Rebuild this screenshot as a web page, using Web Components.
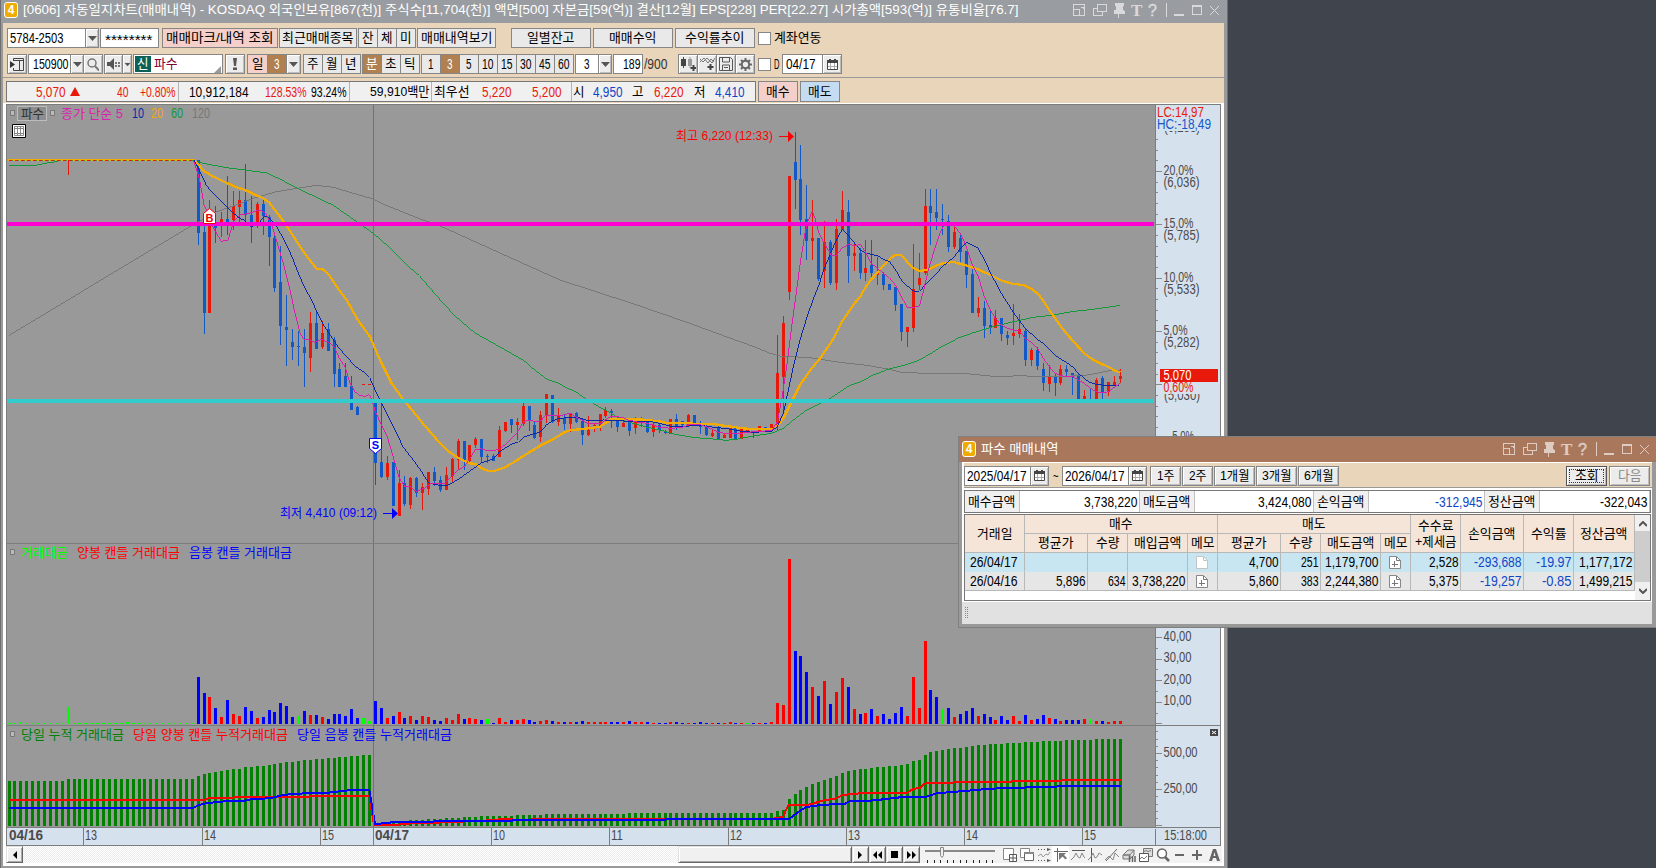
<!DOCTYPE html>
<html lang="ko">
<head>
<meta charset="utf-8">
<title>[0606] 자동일지차트</title>
<style>
    body {
        margin: 0;
        width: 1656px;
        height: 868px;
        overflow: hidden;
        background: #40444c;
        font: 13px/16px "Liberation Sans", "Noto Sans CJK KR", sans-serif;
        color: #000;
    }
    desk-window {
        position: absolute;
    }
    #chart {
        left: 0;
        top: 0;
        width: 1228px;
        height: 868px;
    }
    #trades {
        left: 958px;
        top: 436px;
        width: 698px;
        height: 192px;
    }
</style>
</head>
<body>
<desk-window id="chart" title-bg="#999ca0" frame="main" heading="[0606] 자동일지차트(매매내역) - KOSDAQ 외국인보유[867(천)] 주식수[11,704(천)] 액면[500] 자본금[59(억)] 결산[12월] EPS[228] PER[22.27] 시가총액[593(억)] 유통비율[76.7]">
    <chart-toolbar></chart-toolbar>
    <quote-bar></quote-bar>
    <price-chart></price-chart>
    <chart-scroller></chart-scroller>
</desk-window>
<desk-window id="trades" title-bg="#a9785c" frame="sub" heading="파수 매매내역">
    <trade-search></trade-search>
    <trade-summary></trade-summary>
    <trade-grid></trade-grid>
    <status-strip></status-strip>
</desk-window>

<script>
// Text on a fixed cell: 12px for a Hangul syllable, 6px for anything else
class CellText extends HTMLElement {
    constructor() {
        super();
        this.attachShadow({ mode: "open" });
    }

    connectedCallback() {
        this.shadowRoot.innerHTML = `
        <style>
            :host {
                display: inline-flex;
                flex: none;
                height: 16px;
                line-height: 16px;
            }
            span {
                flex: none;
                height: 16px;
                white-space: pre;
                transform-origin: 0 50%;
            }
        </style>
        <span><slot></slot></span>`;
        const text = this.textContent;
        let width = Number(this.getAttribute("w"));
        if (!width) {
            for (const c of text) width += c > "\u1100" ? 12 : 6;
        }
        if (!/[\u1100-\uffff]/.test(text)) this.style.fontSize = "14px";
        const span = this.shadowRoot.querySelector("span");
        const natural = span.getBoundingClientRect().width;
        this.style.width = width + "px";
        if (natural) span.style.transform = `scaleX(${(width - .5) / natural})`;
    }
}
customElements.define("cell-text", CellText);

const ICONS = {
    down: [9, 5, `<path d="M0 0h9L4.500 5z" fill="#555"/>`],
    up: [10, 9, `<path d="M5 0l5 9H0z" fill="#e8190a"/>`],
    panel: [14, 13, `<path d="M3.500 3V.5h10v12h-10V10M3 2.500h11M9.500 3v9" fill="none" stroke="#444"/><path d="M0 3l5 3.500L0 10z" fill="#333"/>`],
    search: [12, 13, `<circle cx="5" cy="5" r="4" fill="none" stroke="#777" stroke-width="1.500"/><path d="M8 8l4 4.500" stroke="#777" stroke-width="2"/>`],
    sound: [13, 12, `<path d="M0 4h3l4-4v12L3 8H0z" fill="#555"/><path d="M8 4h2v2H8zM8 7h2v2H8zM11 4h2v2h-2zM11 7h2v2h-2z" fill="#777"/>`],
    corner: [7, 7, `<path d="M7 0v7H0z" fill="#999"/>`],
    bang: [4, 12, `<path d="M0 0h4l-1 8H1zM0 9.500h4V12H0z" fill="#555"/>`],
    candles: [15, 14, `<path d="M0 2h5v7H0zM2 0h1v11H2z" fill="#444"/><path d="M7 2h4v7H7zM8.500 0h1v11h-1z" fill="#999"/><path d="M12.500 8v6M9.500 11h6" stroke="#444" stroke-width="2"/>`],
    lines: [15, 14, `<path d="M0 5l4-4 4 5 3-4 3 3M0 2l3 3 4-4 5 5 3-5" fill="none" stroke="#777"/><path d="M10.500 7v6M7.500 10h6" stroke="#444" stroke-width="2"/>`],
    save: [14, 14, `<path d="M.5.5h11l2 2v11H.5z" fill="none" stroke="#555"/><path d="M3.500 1v4h7V1M3.500 13V8h7v5M5 10.500h4" fill="none" stroke="#555"/>`],
    gear: [13, 13, `<circle cx="6.500" cy="6.500" r="3.700" fill="none" stroke="#666" stroke-width="2"/><path d="M6.500 0v3M6.500 10v3M0 6.500h3M10 6.500h3M2 2l2 2M9 9l2 2M11 2L9 4M4 9l-2 2" stroke="#666" stroke-width="2"/>`],
    calendar: [11, 11, `<path d="M.5 1.500h10v9H.5z" fill="#fff" stroke="#444"/><path d="M0 1h11v3H0zM2 0h2v2H2zM7 0h2v2H7z" fill="#444"/><path d="M3.500 4v6M7.500 4v6M1 7.500h9" stroke="#aaa"/>`],
    page: [12, 13, `<path d="M.5.5h7l4 4v8H.5z" fill="#fff" stroke="#c4c4c4"/><path d="M7.500 1v3.500h4" fill="none" stroke="#c4c4c4"/>`],
    memo: [12, 13, `<path d="M.5.5h7l4 4v8H.5z" fill="#fff" stroke="#888"/><path d="M7.500 1v3.500h4M5.500 5v6M3 8.500h6" fill="none" stroke="#777"/>`],
    chevUp: [8, 6, `<path d="M0 5l4-4 4 4" fill="none" stroke="#555" stroke-width="2"/>`],
    chevDown: [8, 6, `<path d="M0 1l4 4 4-4" fill="none" stroke="#555" stroke-width="2"/>`],
    first: [5, 8, `<path d="M5 0v8L1 4z"/>`],
    play: [5, 8, `<path d="M0 0v8l4-4z"/>`],
    rewind: [9, 8, `<path d="M4 0v8L0 4zM9 0v8L5 4z"/>`],
    stop: [7, 7, `<path d="M0 0h7v7H0z"/>`],
    forward: [9, 8, `<path d="M0 0v8l4-4zM5 0v8l4-4z"/>`],
    addPane: [14, 14, `<path d="M6 11.500H.5V.5h10V6" fill="#fff" stroke="#888"/><path d="M6.500 6.500h7v7h-7zM10 6.500v7M6.500 10h7" fill="#fff" stroke="#555"/>`],
    cascade: [14, 14, `<path d="M4 9.500H.5v-9h9V4" fill="#fff" stroke="#888"/><path d="M4.500 4.500h9v8h-9z" fill="#fff" stroke="#666"/><path d="M4 4h10v2H4z" fill="#888"/>`],
    range: [14, 14, `<path d="M1 1.500h10M1 12.500h10" stroke="#555" stroke-dasharray="1 2"/><path d="M1 8l3-2 2 3 3-3 2 1 2-3" fill="none" stroke="#999"/><path d="M10 0l4 1.500L10 3zM10 11l4 1.500-4 1.500z" fill="#555"/>`],
    cross: [14, 14, `<path d="M0 3.500h14M3.500 0v14" stroke="#666"/><path d="M5 5h7l-2 2 3 3-1.500 1.500-3-3L5 12z" fill="#777"/>`],
    hline: [14, 14, `<path d="M1 2.500h13" stroke="#555"/><path d="M0 12l3-3 2-4 2 4 2 1 2-5 2 4 1 1" fill="none" stroke="#888"/>`],
    vline: [14, 14, `<path d="M3.500 0v14" stroke="#745"/><path d="M0 12l3-3 2-4 2 5 2-1 2-4 3 2" fill="none" stroke="#888"/>`],
    trend: [14, 14, `<path d="M1 13L12 1" stroke="#666"/><path d="M0 12l4-4 2 2 2 2 2-7 4 4" fill="none" stroke="#888"/>`],
    eraser: [14, 14, `<path d="M1 7l5-5h6l-4 5zM1 7h7v4H1zM8 11l4-4V2" fill="#ddd" stroke="#777"/><path d="M7.500 8v6M10.500 8v6M13 8v6" stroke="#666" stroke-width="1.500"/>`],
    layers: [14, 14, `<path d="M4.500.5h9v8h-9z" fill="#ddd" stroke="#777"/><path d="M.5 5.500h9v8h-9z" fill="#fff" stroke="#555"/><path d="M1 11l2-2 2 2 3-3M5 3.500l2-1 2 1 3-1" fill="none" stroke="#777"/>`],
    zoom: [14, 14, `<circle cx="6" cy="5.500" r="4.500" fill="#fff" stroke="#666" stroke-width="1.500"/><path d="M9 9l4 4" stroke="#666" stroke-width="2.500"/>`],
    minus: [14, 14, `<path d="M2 6h9v2H2z" fill="#666"/>`],
    plus: [14, 14, `<path d="M2 6h10v2H2zM6 2h2v10H6z" fill="#666"/>`],
    font: [14, 14, `<path d="M2 13L6 1h3l4 12h-3L9 10H6l-1 3zM6.500 8h2L7.500 4z" fill="#666"/>`]
};

class ToolIcon extends HTMLElement {
    constructor() {
        super();
        this.attachShadow({ mode: "open" });
    }

    connectedCallback() {
        const [w, h, body] = ICONS[this.getAttribute("name")];
        this.shadowRoot.innerHTML = `
        <style>
            :host { display: inline-block; flex: none; width: ${w}px; height: ${h}px; }
            svg { display: block; }
        </style>
        <svg width="${w}" height="${h}">${body}</svg>`;
    }
}
customElements.define("tool-icon", ToolIcon);

// Button, input or list face; "kind" picks the colours
class UiBox extends HTMLElement {
    constructor() {
        super();
        this.attachShadow({ mode: "open" });
        this.shadowRoot.innerHTML = `
        <style>
            :host {
                display: inline-flex;
                flex: none;
                align-items: center;
                justify-content: center;
                box-sizing: border-box;
                height: 20px;
                border: 1px solid #868686;
                background: #e9e9e9;
            }
            :host([kind=raised]) { background: #ececec; box-shadow: inset 1px 1px #fff, inset -1px -1px #bdbdbd; }
            :host([kind=pink]) { background: #f5cfca; }
            :host([kind=blue]) { background: #c4dcf2; }
            :host([kind=on]) { background: #b08050; color: #fff; }
            :host([kind=field]) { background: #fff; justify-content: flex-start; }
            :host([kind=check]) { background: #fff; width: 13px; height: 13px; }
            :host([join]) { margin-left: -1px; }
            :host([focus]) { outline: 1px dotted #333; outline-offset: -4px; border-color: #555; }
            :host([off]) { color: #888; }
        </style>
        <slot></slot>`;
    }
}
customElements.define("ui-box", UiBox);

class WindowControls extends HTMLElement {
    constructor() {
        super();
        this.attachShadow({ mode: "open" });
        this.shadowRoot.innerHTML = `
        <style>
            :host { display: block; flex: none; opacity: .62; }
            svg { display: block; overflow: visible; }
        </style>
        <svg width="148" height="16" fill="none" stroke="#fff" shape-rendering="crispEdges">
            <path d="M1.500 2.500h11v11h-11zM1.500 7.500h6v6M9 5h2v2"/>
            <path d="M25.500 2.500h9v7h-9zM21.500 6.500h3M21.500 6v7h9v-3"/>
            <path d="M43 1h8v2h-1v5l2 1v2H42V9l2-1V3h-1zM46.500 11v5" fill="#fff"/>
            <path d="M94.500 1v14M102 13h10M102 12h10M120.500 3.500h9v9h-9zM120 4h10"/>
            <path d="M138 4l9 9M147 4l-9 9" shape-rendering="auto"/>
            <text x="59" y="14" font-family="Liberation Serif, serif" font-weight="bold" font-size="17" fill="#fff" stroke="none">T</text>
            <text x="76" y="14" font-family="Liberation Sans, sans-serif" font-size="16" fill="#fff" stroke="#fff" stroke-width=".4">?</text>
        </svg>`;
    }
}
customElements.define("window-controls", WindowControls);

class DeskWindow extends HTMLElement {
    constructor() {
        super();
        this.attachShadow({ mode: "open" });
    }

    connectedCallback() {
        this.shadowRoot.innerHTML = `
        <style>
            :host {
                display: flex;
                flex-direction: column;
                box-sizing: border-box;
                background: #999;
                border: 0 solid #6f6f6f;
            }
            :host([frame=main]) { border-width: 0 1px 0 1px; }
            :host([frame=sub]) { border-width: 1px 0 1px 1px; border-color: #808080; }
            header {
                display: flex;
                align-items: center;
                box-sizing: border-box;
                height: 23px;
                padding: 0 7px 3px 3px;
                background: ${this.getAttribute("title-bg")};
                color: #fff;
            }
            :host([frame=sub]) header { height: 25px; padding: 0 6px 1px 3px; }
            b {
                box-sizing: border-box;
                width: 14px;
                height: 16px;
                margin-right: 5px;
                border: 1px solid #fff;
                border-radius: 3px;
                background: #f0ab00;
                font: bold 12px/14px "Liberation Sans", sans-serif;
                text-align: center;
            }
            window-controls { margin-left: auto; }
            main {
                display: flex;
                flex-direction: column;
                flex: 1;
                margin: 0 3px 2px 2px;
                background: #fff;
            }
            :host([frame=sub]) main { margin: 0 4px 3px 3px; }
        </style>
        <header><b>4</b><cell-text>${this.getAttribute("heading")}</cell-text><window-controls></window-controls></header>
        <main><slot></slot></main>`;
    }
}
customElements.define("desk-window", DeskWindow);

class ChartToolbar extends HTMLElement {
    constructor() {
        super();
        this.attachShadow({ mode: "open" });
        const group = (labels, on) => labels.map(t =>
            `<ui-box ${t === on ? 'kind="on"' : ""} join style="width:20px"><cell-text>${t}</cell-text></ui-box>`).join("");
        const tool = name => `<ui-box kind="raised" join style="width:20px"><tool-icon name="${name}"></tool-icon></ui-box>`;
        this.shadowRoot.innerHTML = `
        <style>
            :host {
                display: block;
                height: 54px;
                border-bottom: 1px solid #999;
                background: #e8d5ba;
            }
            .row {
                display: flex;
                align-items: center;
                height: 20px;
                padding: 5px 0 0 4px;
            }
            .row + .row { padding-top: 6px; }
            .gap { margin-left: 1px; }
            .stock { background: #0b6158; color: #fff; padding: 0 2px; height: 16px; margin: 0 3px 0 1px; }
            .name { color: #80003c; }
            .count { color: #333; }
        </style>
        <div class="row">
            <ui-box kind="field" style="width:79px"><cell-text style="margin-left:2px">5784-2503</cell-text></ui-box>
            <ui-box kind="raised" join style="width:14px"><tool-icon name="down"></tool-icon></ui-box>
            <ui-box kind="field" class="gap" style="width:59px"><cell-text style="margin:4px 0 0 4px">********</cell-text></ui-box>
            <ui-box kind="pink" style="width:116px;margin-left:3px"><cell-text w="108">매매마크/내역 조회</cell-text></ui-box>
            <ui-box class="gap" style="width:78px"><cell-text>최근매매종목</cell-text></ui-box>
            <span style="width:2px"></span>${group(["잔", "체", "미"])}
            <ui-box class="gap" style="width:79px"><cell-text>매매내역보기</cell-text></ui-box>
            <ui-box style="width:80px;margin-left:15px"><cell-text>일별잔고</cell-text></ui-box>
            <ui-box style="width:80px;margin-left:2px"><cell-text>매매수익</cell-text></ui-box>
            <ui-box style="width:80px;margin-left:2px"><cell-text>수익률추이</cell-text></ui-box>
            <ui-box kind="check" style="margin:0 3px"></ui-box><cell-text>계좌연동</cell-text>
        </div>
        <div class="row">
            <ui-box kind="raised" style="width:20px"><tool-icon name="panel"></tool-icon></ui-box>
            <ui-box kind="field" class="gap" style="width:43px"><cell-text style="margin-left:4px">150900</cell-text></ui-box>
            <ui-box kind="raised" join style="width:14px"><tool-icon name="down"></tool-icon></ui-box>
            <ui-box kind="raised" join style="width:20px"><tool-icon name="search"></tool-icon></ui-box>
            <ui-box kind="raised" class="gap" style="width:19px"><tool-icon name="sound"></tool-icon></ui-box>
            <ui-box kind="raised" join style="width:10px"><tool-icon name="down" style="transform:scale(.7)"></tool-icon></ui-box>
            <ui-box kind="field" style="width:90px;margin-left:1px"><cell-text class="stock">신</cell-text><cell-text class="name">파수</cell-text><tool-icon name="corner" style="margin:10px 0 0 36px"></tool-icon></ui-box>
            <ui-box kind="raised" style="width:20px;margin-left:2px"><tool-icon name="bang"></tool-icon></ui-box>
            <ui-box kind="pink" style="width:21px;margin-left:2px"><cell-text>일</cell-text></ui-box>
            <ui-box kind="on" join style="width:20px"><cell-text>3</cell-text></ui-box>
            <ui-box kind="raised" join style="width:15px"><tool-icon name="down"></tool-icon></ui-box>
            <span style="width:3px"></span>${group(["주", "월", "년"])}
            <span style="width:2px"></span>${group(["분", "초", "틱"], "분")}
            <span style="width:2px"></span>${group(["1", "3", "5", "10", "15", "30", "45", "60"], "3")}
            <ui-box kind="field" class="gap" style="width:24px"><cell-text style="margin-left:8px">3</cell-text></ui-box>
            <ui-box kind="raised" join style="width:14px"><tool-icon name="down"></tool-icon></ui-box>
            <ui-box kind="field" style="width:30px;margin-left:1px"><cell-text style="margin-left:9px">189</cell-text></ui-box>
            <cell-text class="count" style="margin:0 10px 0 1px">/900</cell-text>
            <span style="width:1px"></span>${["candles", "lines", "save", "gear"].map(tool).join("")}
            <ui-box kind="check" style="margin:0 3px"></ui-box><cell-text>D</cell-text>
            <ui-box kind="field" style="width:41px;margin-left:2px"><cell-text style="margin-left:3px">04/17</cell-text></ui-box>
            <ui-box kind="raised" join style="width:20px"><tool-icon name="calendar"></tool-icon></ui-box>
        </div>`;
    }
}
customElements.define("chart-toolbar", ChartToolbar);

class QuoteBar extends HTMLElement {
    constructor() {
        super();
        this.attachShadow({ mode: "open" });
        // [text or "|", left margin, class]
        const cells = [
            ["5,070", 29, "up"], ["^", 4], ["40", 37, "up"], ["+0.80%", 11, "up"], ["|", 2],
            ["10,912,184", 10], ["128.53%", 16, "up"], ["93.24%", 4], ["|", 2],
            ["59,910백만", 20], ["|", 1],
            ["최우선", 2], ["5,220", 12, "up"], ["5,200", 20, "up"], ["|", 9],
            ["시", 1], ["4,950", 8, "down"], ["고", 9], ["6,220", 10, "up"], ["저", 10], ["4,410", 9, "down"]
        ];
        this.shadowRoot.innerHTML = `
        <style>
            :host {
                display: flex;
                box-sizing: border-box;
                height: 25px;
                padding: 3px 0 0 3px;
                background: #e8d5ba;
                align-items: flex-start;
            }
            .quotes {
                display: flex;
                align-items: center;
                box-sizing: border-box;
                width: 750px;
                height: 21px;
                border: 1px solid #777;
                background: #f0f0f0;
            }
            i { width: 1px; height: 19px; background: #b4b4b4; }
            .up { color: #e8190a; }
            .down { color: #0f46c8; }
            ui-box { height: 21px; width: 40px; margin-left: 2px; }
        </style>
        <div class="quotes">${cells.map(([t, m, c]) =>
            t === "|" ? `<i style="margin-left:${m}px"></i>`
            : t === "^" ? `<tool-icon name="up" style="margin-left:${m}px"></tool-icon>`
            : `<cell-text class="${c || ""}" style="margin-left:${m}px">${t}</cell-text>`).join("")}</div>
        <ui-box kind="pink"><cell-text>매수</cell-text></ui-box>
        <ui-box kind="blue"><cell-text>매도</cell-text></ui-box>`;
    }
}
customElements.define("quote-bar", QuoteBar);

const RED = "#e8190a";
const BLUE = "#1259c8";
const STEP = 5.91;
const barX = i => 9 + Math.floor(i * STEP);

// Candles as high, top, bottom, low in thirds of a pixel below "y"; R up, B down
const CANDLES = [
    { from: 32, y: 100, rows: `180 180 399 435 B|335 396 639 702 B|300 360 639 639 R|318 372 384 429 B|336 357 378 411 R|228 357 372 405 B|273 318 360 390 R|273 300 321 366 R|192 300 345 363 B|288 345 381 429 B|306 312 368 384 R|300 312 348 405 B|345 351 411 498 B|396 414 564 576 B|438 546 678 735 B|585 681 690 798 B|687 726 741 780 B|693 738 741 798 B|687 741 759 861 B|636 669 774 816 R|630 669 747 747 B|663 699 741 747 R|669 687 753 753 B|711 720 822 861 B|789 807 861 861 B|789 828 861 861 B|828 858 930 930 B|918 921 945 945 B|852 852 855 855 R|852 852 855 855 R` },
    { from: 62, y: 360, rows: `126 126 309 375 B|129 306 351 354 B|288 309 351 360 R|306 306 438 438 B|330 369 468 468 R|348 369 432 438 B|351 354 435 447 R|351 354 399 411 B|369 381 399 450 R|336 336 387 405 R|321 336 363 378 B|348 360 390 396 B|321 345 390 390 R|294 297 348 366 R|237 243 300 330 R|243 243 303 330 B|255 255 303 309 R|231 237 255 264 R|237 237 291 309 B|282 288 291 309 B|282 288 303 303 B|198 210 291 291 R|186 186 213 216 R|177 177 195 219 B|174 186 195 240 R|129 138 192 198 R|138 138 180 213 B|183 195 234 237 B|153 165 231 246 R|102 102 168 189 R|105 105 186 189 B|144 168 186 198 R|162 174 192 210 B|159 159 192 216 R|156 159 186 189 B|177 183 225 255 B|168 210 225 228 R|192 195 204 216 R|162 162 201 213 R|141 150 168 174 R|147 153 159 204 B|172 174 201 216 B|180 189 201 201 R|180 180 213 228 B|171 180 204 222 R|171 177 186 201 R|186 186 216 219 B|189 195 216 231 R|192 195 210 219 B|210 213 220 222 B|177 177 222 222 R|162 177 201 210 B|183 183 195 201 B|162 165 198 201 R|165 165 195 195 B|183 189 201 222 B|195 198 225 228 B|210 219 228 231 R|195 205 237 237 B|222 225 234 234 R|201 201 234 234 R|198 201 237 237 B|207 207 237 237 R|210 210 213 216 R|213 213 219 234 B|198 198 216 216 R|201 201 210 210 B|192 192 210 210 R` },
    { from: 130, y: 100, rows: `705 819 975 990 R|648 669 831 942 R|228 228 576 600 R|96 186 240 327 B|135 237 360 405 B|255 357 423 480 B|300 414 423 480 R|414 414 537 543 B|363 426 513 564 R|420 426 549 555 B|357 387 549 570 R|273 330 390 390 R|300 336 468 549 B|432 459 468 513 R|444 459 519 537 B|420 504 519 543 R|420 495 519 531 B|471 516 525 555 R|516 522 555 570 B|552 552 570 570 B|561 561 615 633 B|612 612 696 723 B|681 681 696 741 R|432 567 684 696 R|459 534 555 570 R|267 318 519 525 R|267 318 339 435 B|267 336 354 390 B|312 357 360 405 B|345 363 441 456 B|378 396 441 447 R|402 414 456 486 B|453 453 525 564 B|495 522 639 639 B|591 624 639 651 R|603 624 678 714 B|630 675 684 702 B|630 654 684 684 R|654 654 702 723 B|693 705 714 735 B|612 699 708 735 R|642 687 702 714 R|687 693 780 798 B|744 750 780 798 R|741 750 798 810 B|789 807 849 873 B|795 828 852 876 R|819 828 849 888 B|795 807 849 855 R|795 807 816 831 B|819 819 831 885 B|819 828 900 900 B|870 888 900 900 R|864 897 900 900 B|834 840 897 897 R|828 834 876 900 B|846 846 876 888 R|828 846 855 858 R|807 828 837 849 R` }
];

// Polylines: [origin x, origin y, points in thirds of a pixel] per stretch
const AVERAGES = [
    { color: "#777", width: 1, parts: [
        [0, 100, "27,706 575,377 650,335 700,318 760,295 830,275 890,265 950,256 1000,262 1050,277 1120,297 1160,317 1258,356 1314,375 1500,459 1680,540 1902,612 2058,666 2220,725"],
        [740, 100, "0,725 50,743 90,760 120,768 210,773 300,787 380,796 450,808 490,819 520,817 550,821 680,821 760,829 800,829 840,827 880,829 960,829 1030,827 1080,818 1115,811 1141,811"]] },
    { color: "#109a38", width: 1, parts: [
        [0, 100, "28,196 105,196 140,189 160,187 180,181 580,181 610,190 680,203 735,210 800,219 835,235 870,253 920,278 1000,316 1060,358 1120,400 1160,435 1200,475 1220,495 1258,527 1305,582 1365,648 1425,699 1500,741 1569,780"],
        [370, 360, "460,0 500,35 529,56 545,63 565,69 583,80 620,97 650,118 670,130 700,148 724,160 755,180 790,190 832,202 880,212 905,221 955,230 1000,235 1045,238 1065,241 1100,238 1110,236"],
        [740, 100, "0,1015 40,1008 95,1000 130,985 160,960 200,930 240,910 270,896 330,856 360,846 400,825 450,806 500,794 538,780 570,762 600,743 655,714 700,698 750,683 784,674 830,663 880,652 940,645 1000,634 1050,629 1100,622 1141,616"]] },
    { color: "#f5ac00", width: 2.3, parts: [
        [0, 100, "25,180 580,180 592,190 612,213 640,230 700,258 735,270 760,282 790,295 808,308 830,337 855,370 875,400 900,440 925,475 950,506 967,507 985,522 1010,560 1040,600 1075,662 1110,710 1140,780"],
        [370, 360, "30,0 65,70 95,112 130,155 165,198 200,238 230,270 265,294 300,310 316,312 340,327 355,332 375,332 405,322 442,300 460,288 511,257 550,237 583,217 600,211 655,205 690,200 724,178 740,177 820,179 868,184 885,188 940,189 985,192 1030,192 1070,198 1110,204"],
        [740, 100, "0,984 20,986 100,986 115,975 130,955 155,905 180,855 215,805 240,775 275,725 307,663 345,608 361,590 376,563 394,538 412,518 430,497 448,478 466,464 484,465 502,486 520,504 538,513 560,510 589,497 610,489 640,486 675,495 715,508 751,525 784,541 815,551 850,555 875,567 895,583 910,603 935,640 961,677 979,700 1010,735 1033,760 1051,774 1080,790 1105,800 1123,812 1141,817"]] },
    { color: "#0a28a8", width: 1, parts: [
        [0, 100, "582,181 600,215 620,258 640,280 660,300 680,320 700,340 720,355 735,362 755,380 775,372 790,352 800,348 815,362 830,380 850,415 875,468 895,520 915,565 935,600 955,645 975,682 1000,720 1015,742 1040,770 1065,798 1090,815 1108,832"],
        [370, 360, "0,55 10,78 25,110 45,150 70,200 100,262 130,300 155,335 175,368 195,374 230,378 265,358 300,333 334,309 370,297 388,276 406,264 430,250 445,247 460,232 490,222 511,216 529,195 547,183 565,176 601,172 625,172 655,182 700,180 724,182 760,183 800,186 850,186 880,193 905,199 940,200 980,195 1027,201 1070,206 1110,213"],
        [740, 100, "0,993 40,997 95,994 112,980 130,940 145,870 160,800 180,720 200,655 217,605 235,560 253,505 271,462 289,420 307,388 320,400 340,425 361,450 380,460 412,467 430,478 448,484 466,508 484,540 502,558 520,573 538,574 556,555 571,540 589,522 607,500 625,485 643,470 661,446 679,427 697,435 715,445 733,480 760,535 784,580 820,637 856,685 892,718 910,730 946,767 979,787 1000,802 1015,820 1045,845 1069,853 1105,857 1138,856"]] },
    { color: "#dc1eae", width: 1, parts: [
        [0, 100, "580,181 592,215 600,245 612,315 625,340 640,385 650,400 664,424 684,420 690,400 702,362 720,344 745,341 770,332 785,331 800,345 815,375 823,400 835,440 850,490 870,570 885,640 900,700 913,720 925,718 945,728 965,718 985,727 1003,740 1018,775 1035,800 1050,850 1065,875 1080,887 1095,889 1107,884 1115,897"],
        [370, 360, "5,117 16,155 30,185 50,225 65,275 75,310 88,355 103,378 121,380 139,395 150,390 165,384 180,372 200,372 225,369 247,348 265,330 285,318 300,295 315,270 334,266 352,273 372,273 388,266 406,254 424,235 442,218 460,186 478,180 500,186 515,180 525,168 545,165 565,168 583,164 601,159 619,172 637,180 655,192 690,192 706,180 724,168 760,173 775,180 800,186 832,190 870,202 905,205 937,202 955,195 990,194 1009,200 1027,208 1045,216 1075,222 1110,220"],
        [740, 100, "0,1000 40,995 95,992 112,965 125,900 140,800 155,680 170,570 182,480 195,400 205,360 217,335 225,355 235,395 253,430 275,467 290,466 305,445 325,433 345,437 361,433 376,456 394,490 412,505 430,520 448,533 466,555 484,590 502,622 520,622 538,618 550,575 565,510 580,460 600,400 612,375 640,375 661,400 679,440 697,495 715,530 733,590 751,630 766,655 784,676 802,685 820,690 838,693 856,715 874,727 892,745 910,775 928,800 946,820 961,827 979,829 997,829 1015,840 1033,850 1051,865 1069,875 1087,879 1105,875 1123,862 1141,850"]] }
];

const CUM_LINES = [
    { color: "#f00", width: 2, parts: [
        [0, 530, "28,810 610,810 630,804 700,804 705,801 925,801 935,798 1108,798 1122,884 1195,884 1235,880 1300,878 1380,876 1400,873 1440,873"],
        [480, 680, "0,423 60,418 96,418 105,420 235,416 555,416 720,416"],
        [720, 540, "0,836 160,836 190,830 200,805 208,794 265,794 310,782 345,776 370,765 440,758 560,758 580,747 600,743 617,729 700,728 705,726 870,726 880,723 1020,722 1030,720 1203,720"]] },
    { color: "#00f", width: 2, parts: [
        [0, 530, "28,834 580,834 595,826 612,821 650,816 690,813 735,812 755,807 810,805 850,795 880,792 915,790 980,789 1025,783 1060,780 1108,780 1125,882 1150,880 1185,876 1300,876 1305,873 1440,873"],
        [480, 680, "0,423 96,423 100,420 240,420 555,419 560,417 720,417"],
        [720, 540, "0,836 208,836 240,812 260,801 300,795 375,791 390,783 450,782 490,778 540,772 620,770 650,760 720,754 790,748 850,744 915,743 920,741 1010,740 1015,738 1203,738"]] }
];

// Traded value: height and colour from bar 32 on
const VOLUME = "47B 31B 27R 16B 7R 24B 10R 8R 17B 13B 6R 7B 14B 12B 21B 18B 7B 8G 13B 9R 9B 7R 5B 10B 10B 8B 15B 6B 6G 3G 23B 16B 6R 8B 12R 6B 8R 4B 8R 7R 4B 3B 6R 4R 10R 5B 6R 5R 4B 5G 1B 6R 2R 4B 4R 5R 4B 2B 3R 4R 3B 2R 2B 2R 2B 3B 2R 2R 2R 2R 2B 2B 2R 3B 2R 2R 2B 1R 1B 1B 2R 2B 1B 1R 1B 2B 1B 1R 1B 1R 2R 1B 1R 1G 1B 1R 1B 2R 21R 19R 165R 73B 68B 52B 37R 28B 43R 20B 32R 46R 37B 15R 10B 11R 15B 8R 10B 5B 11B 17B 8R 47R 16R 83R 34B 27B 15G 16B 7R 10B 13B 16B 8R 10B 7B 4R 8B 4B 8R 3R 9B 4R 5B 9B 6R 5B 3R 4B 4B 4B 5R 5G 3R 3B 2R 3R 3R".split(" ");

// Running total: [count, height]
const TOTALS = [[10, 45], [22, 47], [1, 50], [1, 52], [1, 53], [1, 54], [1, 55], [1, 56], [2, 57], [2, 59], [2, 60], [1, 61], [1, 62], [1, 63], [2, 64], [1, 65], [2, 66], [2, 67], [2, 68], [2, 69], [2, 70], [2, 71],
    [1, 2], [2, 3], [2, 4], [1, 5], [3, 6], [3, 7], [3, 8], [3, 9], [6, 10], [5, 11], [14, 12], [25, 13], [1, 15], [1, 16], [1, 27], [1, 32], [1, 36], [1, 39], [1, 42], [1, 44], [1, 46], [1, 48], [1, 50], [1, 53], [1, 55], [1, 56], [2, 57], [1, 58], [2, 59], [2, 60], [1, 61], [1, 62], [1, 65], [1, 66], [1, 71], [1, 74], [1, 75], [1, 76], [1, 77], [2, 78], [1, 79], [1, 80], [2, 81], [3, 82], [3, 83], [3, 84], [4, 85], [5, 86], [5, 87]];

class PriceChart extends HTMLElement {
    constructor() {
        super();
        this.attachShadow({ mode: "open" });
    }

    connectedCallback() {
        this.shadowRoot.innerHTML = `
        <style>
            :host {
                display: block;
                width: 1213px;
                height: 740px;
                margin: 1px 0 0 3px;
                border: 1px solid #7d7d7d;
            }
            svg { display: block; }
            text { font: 13px "Liberation Sans", "Noto Sans CJK KR", sans-serif; white-space: pre; }
            .num { font-size: 14px; }
            .day { font-weight: bold; }
            .mark { font-size: 11px; font-weight: bold; }
        </style>
        <svg width="1213" height="740" viewBox="7 105 1213 740">
            <rect x="7" y="105" width="1149" height="722" fill="#999"/>
            <g shape-rendering="crispEdges">${this.volume()}${this.totals()}</g>
            ${this.traces(CUM_LINES)}
            <path d="M373.500 105V827" stroke="#d04848" shape-rendering="crispEdges"/>
            <g shape-rendering="crispEdges">${this.candles()}</g>
            ${this.traces(AVERAGES)}
            <path d="M9 160.500H194" stroke="${RED}" stroke-dasharray="3 3" shape-rendering="crispEdges"/>
            <path d="M12 160.500H194" stroke="#4c9a20" stroke-dasharray="1 5" shape-rendering="crispEdges"/>
            <path d="M68.500 160v15" stroke="${RED}" shape-rendering="crispEdges"/>
            <rect x="7" y="222" width="1147" height="4" fill="#ff00d4"/>
            <rect x="7" y="399" width="1147" height="4" fill="#33cccc"/>
            <path d="M7 543.500H1220M7 725.500H1220M7 827.500H1220" stroke="#7d7d7d"/>
            ${this.marks()}
            ${this.legends()}
            ${this.priceAxis()}
            ${this.timeAxis()}
        </svg>`;
    }

    text(x, y, width, str, fill, cls = "") {
        if (!/[\u1100-\uffff]/.test(str)) cls += " num";
        return `<text x="${x}" y="${y}" textLength="${width}" lengthAdjust="spacingAndGlyphs" fill="${fill}" class="${cls.trim()}">${str}</text>`;
    }

    candles() {
        let out = "";
        for (const { from, y, rows } of CANDLES) {
            rows.split("|").forEach((row, n) => {
                const p = row.split(" ");
                const [high, top, bottom, low] = p.slice(0, 4).map(v => Math.round(y + v / 3));
                const x = barX(from + n);
                out += `<path d="M${x} ${high}h1V${low}h-1zM${x - 1} ${top}h3V${Math.max(bottom, top + 1)}h-3z" fill="${p[4] === "R" ? RED : BLUE}"/>`;
            });
        }
        return out;
    }

    traces(list) {
        return list.map(line => line.parts.map(([ox, oy, points]) =>
            `<polyline points="${points}" transform="translate(${ox} ${oy}) scale(.33333)" fill="none" stroke="${line.color}" stroke-width="${line.width * 3}" shape-rendering="crispEdges"/>`).join("")).join("");
    }

    volume() {
        const fill = { R: "#f00", B: "#00f", G: "#0f0" };
        let out = "";
        for (let i = 0; i < 32; i++) {
            const h = i === 10 ? 17 : i === 2 || i === 20 ? 2 : 1;
            out += `<rect x="${barX(i) - 1}" y="${724 - h}" width="3" height="${h}" fill="#0f0"/>`;
        }
        VOLUME.forEach((v, n) => {
            const h = parseInt(v);
            out += `<rect x="${barX(32 + n) - 1}" y="${724 - h}" width="3" height="${h}" fill="${fill[v.slice(-1)]}"/>`;
        });
        return out;
    }

    totals() {
        let out = "";
        let i = 0;
        for (const [count, h] of TOTALS) {
            for (let n = 0; n < count; n++, i++) {
                out += `<rect x="${barX(i) - 1}" y="${826 - h}" width="3" height="${h}" fill="#008200"/>`;
            }
        }
        return out;
    }

    marks() {
        return `
            <path d="M203.500 223.500v-10l6-5 6 5v10z" fill="#fff" stroke="#e00"/>
            <path d="M369.500 438.500h12v10l-6 5-6-5z" fill="#fff" stroke="#00f"/>
            <text x="209.500" y="222" text-anchor="middle" class="mark" fill="#e00">B</text>
            <text x="375.500" y="449" text-anchor="middle" class="mark" fill="#00f">S</text>
            ${this.text(676, 140, 97, "최고 6,220 (12:33)", "#f00")}
            <path d="M779 136.500h10" stroke="#f00"/><path d="M788 131l6 5.500-6 5.500z" fill="#f00"/>
            ${this.text(280, 517, 97, "최저 4,410 (09:12)", "#00f")}
            <path d="M383 513.500h10" stroke="#00f"/><path d="M392 508l6 5.500-6 5.500z" fill="#00f"/>`;
    }

    legends() {
        const dot = (x, y) => `<path d="M${x + .5} ${y + .5}h4v5h-4z" fill="#bbb" stroke="#777"/>`;
        return `
            ${dot(10, 110)}${dot(50, 110)}
            <rect x="17.500" y="106.500" width="29" height="14" fill="#8e8e8e" stroke="#bdbdbd"/>
            ${this.text(21, 118, 23, "파수", "#333")}
            ${this.text(61, 118, 62, "종가 단순 5", "#dc1eae")}
            ${this.text(132, 118, 12, "10", "#0a28a8")}
            ${this.text(151, 118, 12, "20", "#f2a900")}
            ${this.text(171, 118, 12, "60", "#109a38")}
            ${this.text(192, 118, 18, "120", "#777")}
            <path d="M12.500 124.500h13v13h-13z" fill="#fff" stroke="#000"/>
            <path d="M14.500 126.500h9v9h-9zM17.500 126v10M20.500 126v10M14 128.500h10M14 133.500h10" fill="none" stroke="#888"/>
            ${dot(10, 549)}
            ${this.text(21, 557, 47, "거래대금", "#0f0")}
            ${this.text(77, 557, 103, "양봉 캔들 거래대금", "#f00")}
            ${this.text(189, 557, 103, "음봉 캔들 거래대금", "#00f")}
            ${dot(10, 731)}
            ${this.text(21, 739, 103, "당일 누적 거래대금", "#008200")}
            ${this.text(133, 739, 155, "당일 양봉 캔들 누적거래대금", "#f00")}
            ${this.text(297, 739, 155, "당일 음봉 캔들 누적거래대금", "#00f")}`;
    }

    priceAxis() {
        let ticks = "";
        for (let n = -3; n < 28; n++) {
            ticks += `M1156 ${Math.round(171 + n * 10.66) + .5}h${n % 5 === 0 ? 6 : 2}`;
        }
        for (let n = 0; n < 9; n++) {
            ticks += `M1156 ${Math.round(637 + n * 10.8) + .5}h${n % 2 ? 2 : 6}`;
        }
        for (let n = -3; n < 11; n++) {
            ticks += `M1156 ${Math.round(753 + n * 7.240) + .5}h${n % 5 === 0 ? 6 : 2}`;
        }
        const ink = "#4a4a4a";
        const labels = [["20,0%", 175, 30], ["(6,036)", 187, 36], ["15,0%", 228, 30], ["(5,785)", 240, 36], ["10,0%", 282, 30], ["(5,533)", 294, 36], ["5,0%", 335, 24], ["(5,282)", 347, 36],
            ["40,00", 641, 28], ["30,00", 662, 28], ["20,00", 684, 28], ["10,00", 705, 28], ["500,00", 757, 34], ["250,00", 793, 34]];
        return `
            <rect x="1156" y="105" width="64" height="740" fill="#d6e1ee"/>
            <path d="M1155.500 105V827M1156 725.500h64" stroke="#7d7d7d"/>
            <path d="${ticks}" stroke="#888"/>
            ${labels.map(([t, y, w]) => this.text(1163.5, y, w, t, ink)).join("")}
            ${this.text(1169, 441, 25, "-5,0%", ink)}
            <clipPath id="under"><path d="M1163 131h56v10h-56zM1163 394h56v10h-56z"/></clipPath>
            <g clip-path="url(#under)">
                ${this.text(1164, 132, 36, "(6,288)", ink)}
                ${this.text(1164, 400, 36, "(5,030)", ink)}
            </g>
            ${this.text(1157, 117, 47, "LC:14,97", RED)}
            ${this.text(1157, 129, 54, "HC:-18,49", BLUE)}
            <rect x="1160" y="369" width="58" height="13" fill="${RED}"/>
            ${this.text(1163.5, 380, 28, "5,070", "#fff")}
            ${this.text(1163.5, 392, 30, "0,60%", RED)}
            <rect x="1210" y="729" width="8" height="7" fill="#444"/>
            <path d="M1212 731l4 3M1216 731l-4 3" stroke="#fff"/>`;
    }

    timeAxis() {
        const hours = [["13", 83], ["14", 202], ["15", 320], ["10", 491], ["11", 609], ["12", 728], ["13", 846], ["14", 964], ["15", 1082]];
        const ink = "#4a4a4a";
        return `
            <rect x="7" y="828" width="1213" height="17" fill="#d6e1ee"/>
            <path d="M7 827.500h1213M373.500 828v17M1155.500 829v16${hours.map(h => `M${h[1] + .5} 828v17`).join("")}" stroke="#7d7d7d"/>
            ${hours.map(([t, x]) => this.text(x + 2, 840, 12, t, ink)).join("")}
            ${this.text(9, 840, 34, "04/16", ink, "day")}
            ${this.text(375, 840, 34, "04/17", ink, "day")}
            ${this.text(1164, 840, 43, "15:18:00", ink)}`;
    }
}
customElements.define("price-chart", PriceChart);

class ChartScroller extends HTMLElement {
    constructor() {
        super();
        this.attachShadow({ mode: "open" });
        const tools = ["addPane", "cascade", "range", "cross", "hline", "vline", "trend", "eraser", "layers", "zoom", "minus", "plus", "font"];
        let ticks = "";
        for (let n = 0; n < 11; n++) ticks += `M${Math.round(2 + n * 6.500) + .5} 14v3`;
        this.shadowRoot.innerHTML = `
        <style>
            :host {
                display: flex;
                width: 1216px;
                height: 17px;
                margin-left: 3px;
                background: #f2f2f2;
            }
            :host > * { flex: none; }
            .btn, .thumb, .track { flex: none; }
            .btn, .thumb {
                display: flex;
                align-items: center;
                justify-content: center;
                box-sizing: border-box;
                width: 17px;
                background: #f0f0f0;
                border: 1px solid;
                border-color: #e0e0e0 #666 #666 #e0e0e0;
                box-shadow: inset 1px 1px #fff, inset -1px -1px #aaa;
            }
            .track { width: 655px; background: repeating-conic-gradient(#fff 0 25%, #ececec 0 50%) 0 0 / 2px 2px; }
            .thumb { width: 174px; }
            .slider { display: block; flex: none; margin: 0 6px 0 5px; }
            .tools { display: flex; flex: none; }
            .tools span { display: flex; align-items: center; justify-content: center; width: 17px; }
            .tools .active { background: #fff; }
        </style>
        <div class="btn"><tool-icon name="first"></tool-icon></div>
        <div class="track"></div>
        <div class="thumb"></div>
        ${["play", "rewind", "stop", "forward"].map(n => `<div class="btn"><tool-icon name="${n}"></tool-icon></div>`).join("")}
        <svg class="slider" width="70" height="17">
            <path d="M0 5h70" stroke="#888" stroke-width="2"/><path d="${ticks}" stroke="#222"/>
            <path d="M15.500 1.500h3v8l-1.500 2-1.500-2z" fill="#eee" stroke="#888"/>
        </svg>
        <div class="tools">${tools.map(n => `<span class="${n === "cross" ? "active" : ""}"><tool-icon name="${n}"></tool-icon></span>`).join("")}</div>`;
    }
}
customElements.define("chart-scroller", ChartScroller);

class TradeSearch extends HTMLElement {
    constructor() {
        super();
        this.attachShadow({ mode: "open" });
        const date = d => `<ui-box kind="field" style="width:67px"><cell-text style="margin-left:2px">${d}</cell-text></ui-box><ui-box kind="raised" join style="width:19px"><tool-icon name="calendar"></tool-icon></ui-box>`;
        const span = (t, w, m = 1) => `<ui-box kind="raised" style="width:${w}px;margin-left:${m}px"><cell-text>${t}</cell-text></ui-box>`;
        this.shadowRoot.innerHTML = `
        <style>
            :host {
                display: flex;
                align-items: center;
                box-sizing: border-box;
                height: 25px;
                padding-top: 1px;
                margin: 1px 0 0 2px;
                border-bottom: 1px solid #999;
                background: #e8d5ba;
            }
        </style>
        ${date("2025/04/17")}<cell-text style="margin:0 3px 0 4px">~</cell-text>${date("2026/04/17")}
        ${span("1주", 31, 3)}${span("2주", 31)}${span("1개월", 41)}${span("3개월", 41)}${span("6개월", 41)}
        <ui-box kind="raised" focus style="width:41px;margin-left:auto"><cell-text>조회</cell-text></ui-box>
        <ui-box kind="raised" off style="width:41px;margin:0 2px"><cell-text>다음</cell-text></ui-box>`;
    }
}
customElements.define("trade-search", TradeSearch);

class TradeSummary extends HTMLElement {
    constructor() {
        super();
        this.attachShadow({ mode: "open" });
        const items = [["매수금액", "3,738,220", 121], ["매도금액", "3,424,080", 120], ["손익금액", "-312,945", 116], ["정산금액", "-322,043", 111]];
        this.shadowRoot.innerHTML = `
        <style>
            :host {
                display: flex;
                box-sizing: border-box;
                height: 23px;
                margin: 2px 1px 1px 2px;
                border: 1px solid #777;
                background: #fff;
            }
            span { display: flex; align-items: center; justify-content: center; width: 54px; background: #f0f0f0; border-right: 1px solid #c0c0c0; }
            div { display: flex; align-items: center; justify-content: flex-end; box-sizing: border-box; padding-right: 1px; border-right: 1px solid #c0c0c0; }
            .minus { color: #0f46c8; }
        </style>
        ${items.map(([label, value, w], n) => `<span><cell-text w="48">${label}</cell-text></span><div class="${n === 2 ? "minus" : ""}" style="width:${w}px"><cell-text>${value}</cell-text></div>`).join("")}`;
    }
}
customElements.define("trade-summary", TradeSummary);

class TradeGrid extends HTMLElement {
    constructor() {
        super();
        this.attachShadow({ mode: "open" });
        const row = (cells, cls) => cells.map((c, n) => {
            const icon = c === "page" || c === "memo";
            const blue = n === 10 || n === 11 ? "minus" : "";
            return `<div class="${cls} ${icon || n === 0 ? "mid" : ""} ${blue}">${icon ? `<tool-icon name="${c}"></tool-icon>` : c && `<cell-text>${c}</cell-text>`}</div>`;
        }).join("");
        const head = (t, area) => `<div class="head" style="grid-area:${area}">${t.split("|").map(s => `<cell-text>${s}</cell-text>`).join("")}</div>`;
        this.shadowRoot.innerHTML = `
        <style>
            :host {
                display: flex;
                box-sizing: border-box;
                height: 87px;
                margin: 0 1px 0 2px;
                border: 1px solid #777;
                background: #fff;
            }
            .grid {
                display: grid;
                grid-template-columns: 60px 63px 40px 60px 30px 63px 40px 60px 30px 50px 63px 50px 61px;
                grid-template-rows: 19px 19px 19px 19px;
                align-content: start;
            }
            .grid div {
                display: flex;
                align-items: center;
                justify-content: flex-end;
                box-sizing: border-box;
                padding-right: 1px;
                border-right: 1px solid #b8b8b8;
                border-bottom: 1px solid #b8b8b8;
            }
            .grid .head { flex-direction: column; justify-content: center; background: #f4e5d8; padding: 0; }
            .grid .sel { background: #c8e6f2; border-bottom-color: #c8e6f2; }
            .grid .alt { background: #e6e6e6; }
            .grid .mid { justify-content: center; }
            .grid .minus { color: #0f46c8; }
            .bar { display: flex; flex-direction: column; align-items: center; width: 15px; background: #f0f0f0; padding: 6px 0; }
            .bar i { flex: 1; width: 15px; margin: 4px 0 6px; background: #cdcdcd; }
        </style>
        <div class="grid">
            ${head("거래일", "1 / 1 / 3 / 2")}${head("매수", "1 / 2 / 2 / 6")}${head("매도", "1 / 6 / 2 / 10")}
            ${head("수수료|+제세금", "1 / 10 / 3 / 11")}${head("손익금액", "1 / 11 / 3 / 12")}${head("수익률", "1 / 12 / 3 / 13")}${head("정산금액", "1 / 13 / 3 / 14")}
            ${["평균가", "수량", "매입금액", "메모", "평균가", "수량", "매도금액", "메모"].map((t, n) => head(t, `2 / ${n + 2}`)).join("")}
            ${row(["26/04/17", "", "", "", "page", "4,700", "251", "1,179,700", "memo", "2,528", "-293,688", "-19.97", "1,177,172"], "sel")}
            ${row(["26/04/16", "5,896", "634", "3,738,220", "memo", "5,860", "383", "2,244,380", "memo", "5,375", "-19,257", "-0.85", "1,499,215"], "alt")}
        </div>
        <div class="bar"><tool-icon name="chevUp"></tool-icon><i></i><tool-icon name="chevDown"></tool-icon></div>`;
    }
}
customElements.define("trade-grid", TradeGrid);

class StatusStrip extends HTMLElement {
    constructor() {
        super();
        this.attachShadow({ mode: "open" });
        this.shadowRoot.innerHTML = `
        <style>
            :host { display: flex; align-items: center; flex: 1; margin-top: 1px; background: #e1e1e1; }
            svg { display: block; margin-left: 3px; }
        </style>
        <svg width="4" height="12" shape-rendering="crispEdges"><path d="M.5 0v12M2.500 0v12" stroke="#888" stroke-dasharray="1 1"/></svg>`;
    }
}
customElements.define("status-strip", StatusStrip);
</script>
</body>
</html>
